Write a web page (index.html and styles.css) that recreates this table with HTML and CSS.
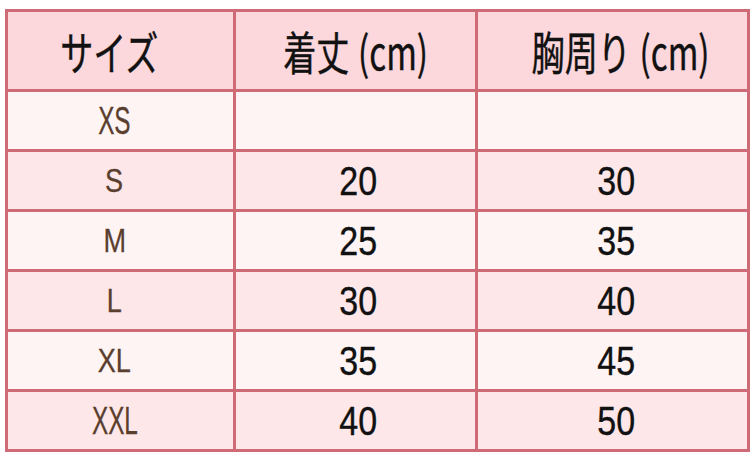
FILE: index.html
```html
<!DOCTYPE html>
<html lang="ja">
<head>
<meta charset="utf-8">
<title>サイズ表</title>
<link rel="stylesheet" href="styles.css">
</head>
<body>
<table class="size-table">
  <colgroup>
    <col class="col-size">
    <col class="col-length">
    <col class="col-chest">
  </colgroup>
  <thead>
    <tr class="head-row">
      <th class="h-size"><span class="h-text">サイズ</span></th>
      <th class="h-length"><span class="h-text">着丈<span class="unit">(cm)</span></span></th>
      <th class="h-chest"><span class="h-text">胸周り<span class="unit">(cm)</span></span></th>
    </tr>
  </thead>
  <tbody>
    <tr class="row light">
      <td class="size"><span class="lbl big">XS</span></td>
      <td class="num"></td>
      <td class="num"></td>
    </tr>
    <tr class="row pink">
      <td class="size"><span class="lbl">S</span></td>
      <td class="num"><span class="n">20</span></td>
      <td class="num"><span class="n">30</span></td>
    </tr>
    <tr class="row light">
      <td class="size"><span class="lbl">M</span></td>
      <td class="num"><span class="n">25</span></td>
      <td class="num"><span class="n">35</span></td>
    </tr>
    <tr class="row pink">
      <td class="size"><span class="lbl">L</span></td>
      <td class="num"><span class="n">30</span></td>
      <td class="num"><span class="n">40</span></td>
    </tr>
    <tr class="row light">
      <td class="size"><span class="lbl">XL</span></td>
      <td class="num"><span class="n">35</span></td>
      <td class="num"><span class="n">45</span></td>
    </tr>
    <tr class="row pink">
      <td class="size"><span class="lbl big">XXL</span></td>
      <td class="num"><span class="n">40</span></td>
      <td class="num"><span class="n">50</span></td>
    </tr>
  </tbody>
</table>
</body>
</html>
```

FILE: styles.css
```css
html, body {
  margin: 0;
  padding: 0;
  background: #ffffff;
}

body {
  padding: 9px 0 0 5px;
}

.size-table {
  border-collapse: collapse;
  table-layout: fixed;
  width: 742px;
}

.col-size { width: 228px; }
.col-length { width: 242px; }
.col-chest { width: 272px; }

.size-table th,
.size-table td {
  border: 3px solid #cf6b76;
  padding: 0;
  text-align: center;
  vertical-align: middle;
}

.head-row {
  height: 80px;
  background: #fcd7db;
}

.h-text {
  display: inline-block;
  font-family: "Noto Sans CJK JP", sans-serif;
  font-weight: 400;
  font-size: 46px;
  line-height: 1;
  color: #111111;
  -webkit-text-stroke: 0.4px #111111;
  transform: scaleX(0.72);
  white-space: nowrap;
}

.unit {
  margin-left: 12px;
}

.h-size .h-text { margin-left: -22px; }
.h-chest .h-text { margin-left: 16px; }

.row { height: 60px; }
.row.light { background: #fef4f4; }
.row.pink { background: #fde7e9; }

.lbl {
  display: inline-block;
  font-family: "Liberation Sans", Arial, sans-serif;
  font-size: 33px;
  line-height: 1;
  color: #5a3e2e;
  -webkit-text-stroke: 0.3px #5a3e2e;
  transform: scaleX(0.82);
  margin-left: -12px;
}

.lbl.big {
  font-size: 38px;
  transform: scaleX(0.64);
}

.n {
  display: inline-block;
  font-family: "Liberation Sans", Arial, sans-serif;
  font-size: 40px;
  line-height: 1;
  color: #111111;
  -webkit-text-stroke: 0.4px #111111;
  transform: scaleX(0.85);
}

.size-table td.num:nth-child(2) .n { margin-left: 6px; }
.size-table td.num:nth-child(3) .n { margin-left: 8px; }
```
